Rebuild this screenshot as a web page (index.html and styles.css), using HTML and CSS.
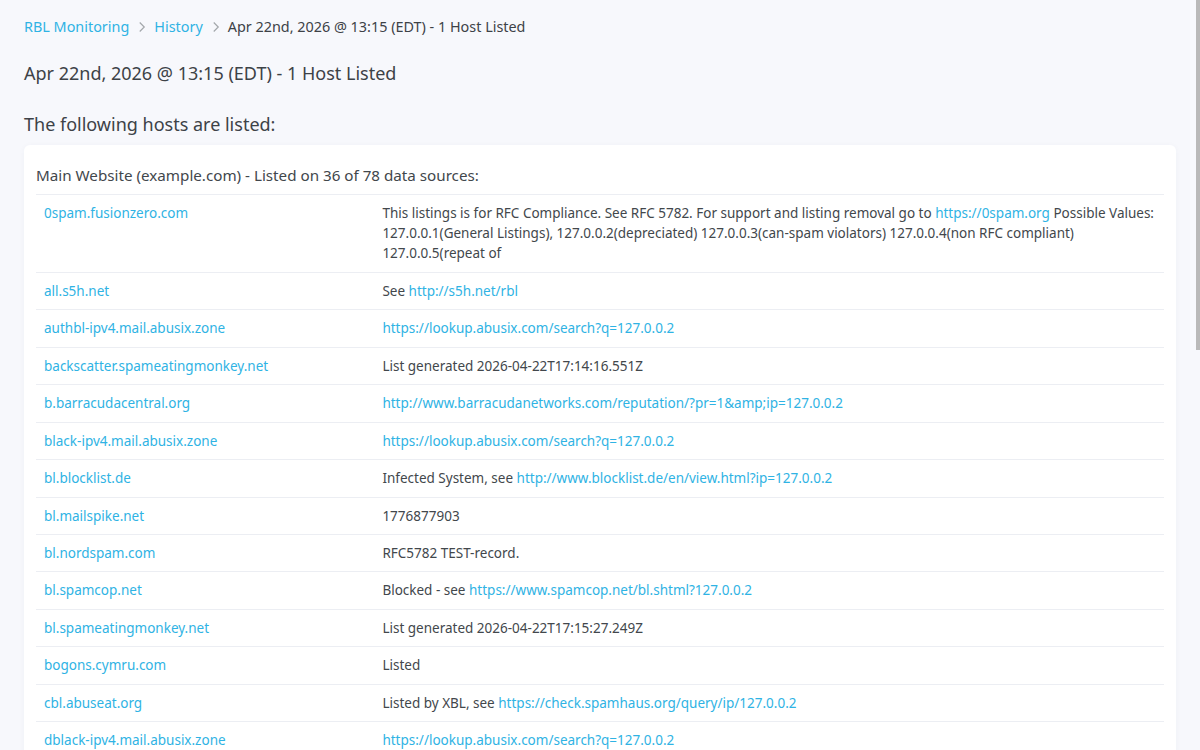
FILE: index.html
```html
<!DOCTYPE html>
<html lang="en">
<head>
    <meta charset="UTF-8">
    <meta name="viewport" content="width=device-width, initial-scale=1.0">
    <title>RBL Monitoring - History</title>
    <link rel="stylesheet" href="styles.css">
</head>
<body>
    <div class="page">
        <nav class="breadcrumb">
            <a href="#">RBL Monitoring</a>
            <svg class="chevron" viewBox="0 0 10 16"><path d="M2 2l6 6-6 6"/></svg>
            <a href="#">History</a>
            <svg class="chevron" viewBox="0 0 10 16"><path d="M2 2l6 6-6 6"/></svg>
            <span class="current">Apr 22nd, 2026 @ 13:15 (EDT) - 1 Host Listed</span>
        </nav>

        <h1 class="page-title">Apr 22nd, 2026 @ 13:15 (EDT) - 1 Host Listed</h1>

        <h2 class="section-title">The following hosts are listed:</h2>

        <div class="card">
            <div class="card-header">Main Website (example.com) - Listed on 36 of 78 data sources:</div>
            <table class="listings">
                <tbody>
                    <tr>
                        <td class="source"><a href="#">0spam.fusionzero.com</a></td>
                        <td>This listings is for RFC Compliance. See RFC 5782. For support and listing removal go to <a href="#">https://0spam.org</a> Possible Values: 127.0.0.1(General Listings), 127.0.0.2(depreciated) 127.0.0.3(can-spam violators) 127.0.0.4(non RFC compliant) 127.0.0.5(repeat of</td>
                    </tr>
                    <tr>
                        <td class="source"><a href="#">all.s5h.net</a></td>
                        <td>See <a href="#">http://s5h.net/rbl</a></td>
                    </tr>
                    <tr>
                        <td class="source"><a href="#">authbl-ipv4.mail.abusix.zone</a></td>
                        <td><a href="#">https://lookup.abusix.com/search?q=127.0.0.2</a></td>
                    </tr>
                    <tr>
                        <td class="source"><a href="#">backscatter.spameatingmonkey.net</a></td>
                        <td>List generated 2026-04-22T17:14:16.551Z</td>
                    </tr>
                    <tr>
                        <td class="source"><a href="#">b.barracudacentral.org</a></td>
                        <td><a href="#">http://www.barracudanetworks.com/reputation/?pr=1&amp;amp;ip=127.0.0.2</a></td>
                    </tr>
                    <tr>
                        <td class="source"><a href="#">black-ipv4.mail.abusix.zone</a></td>
                        <td><a href="#">https://lookup.abusix.com/search?q=127.0.0.2</a></td>
                    </tr>
                    <tr>
                        <td class="source"><a href="#">bl.blocklist.de</a></td>
                        <td>Infected System, see <a href="#">http://www.blocklist.de/en/view.html?ip=127.0.0.2</a></td>
                    </tr>
                    <tr>
                        <td class="source"><a href="#">bl.mailspike.net</a></td>
                        <td>1776877903</td>
                    </tr>
                    <tr>
                        <td class="source"><a href="#">bl.nordspam.com</a></td>
                        <td>RFC5782 TEST-record.</td>
                    </tr>
                    <tr>
                        <td class="source"><a href="#">bl.spamcop.net</a></td>
                        <td>Blocked - see <a href="#">https://www.spamcop.net/bl.shtml?127.0.0.2</a></td>
                    </tr>
                    <tr>
                        <td class="source"><a href="#">bl.spameatingmonkey.net</a></td>
                        <td>List generated 2026-04-22T17:15:27.249Z</td>
                    </tr>
                    <tr>
                        <td class="source"><a href="#">bogons.cymru.com</a></td>
                        <td>Listed</td>
                    </tr>
                    <tr>
                        <td class="source"><a href="#">cbl.abuseat.org</a></td>
                        <td>Listed by XBL, see <a href="#">https://check.spamhaus.org/query/ip/127.0.0.2</a></td>
                    </tr>
                    <tr>
                        <td class="source"><a href="#">dblack-ipv4.mail.abusix.zone</a></td>
                        <td><a href="#">https://lookup.abusix.com/search?q=127.0.0.2</a></td>
                    </tr>
                    <tr>
                        <td class="source"><a href="#">dnsbl.dronebl.org</a></td>
                        <td><a href="#">https://dronebl.org/lookup?ip=127.0.0.2</a></td>
                    </tr>
                    <tr>
                        <td class="source"><a href="#">dnsbl.sorbs.net</a></td>
                        <td>Listed</td>
                    </tr>
                    <tr>
                        <td class="source"><a href="#">dnsbl-1.uceprotect.net</a></td>
                        <td>Net 127.0.0.2 is UCEPROTECT-Level1 listed.</td>
                    </tr>
                    <tr>
                        <td class="source"><a href="#">dnsbl-2.uceprotect.net</a></td>
                        <td>Net 127.0.0.0/24 is UCEPROTECT-Level2 listed.</td>
                    </tr>
                    <tr>
                        <td class="source"><a href="#">dnsbl-3.uceprotect.net</a></td>
                        <td>Net 127.0.0.0/8 is UCEPROTECT-Level3 listed.</td>
                    </tr>
                    <tr>
                        <td class="source"><a href="#">dyna.spamrats.com</a></td>
                        <td>SPAMRATS IP Addresses See: <a href="#">http://www.spamrats.com/bl?127.0.0.2</a></td>
                    </tr>
                    <tr>
                        <td class="source"><a href="#">exitnodes.tor.dnsbl.sectoor.de</a></td>
                        <td>Listed</td>
                    </tr>
                    <tr>
                        <td class="source"><a href="#">ix.dnsbl.manitu.net</a></td>
                        <td>Your e-mail service was detected by mx.selfip.biz as spamming</td>
                    </tr>
                    <tr>
                        <td class="source"><a href="#">noptr.spamrats.com</a></td>
                        <td>SPAMRATS IP Addresses See: <a href="#">http://www.spamrats.com/bl?127.0.0.2</a></td>
                    </tr>
                    <tr>
                        <td class="source"><a href="#">psbl.surriel.com</a></td>
                        <td>Listed in PSBL, see <a href="#">http://psbl.org/listing?ip=127.0.0.2</a></td>
                    </tr>
                    <tr>
                        <td class="source"><a href="#">spam.dnsbl.sorbs.net</a></td>
                        <td>Listed</td>
                    </tr>
                    <tr>
                        <td class="source"><a href="#">spam.spamrats.com</a></td>
                        <td>SPAMRATS IP Addresses See: <a href="#">http://www.spamrats.com/bl?127.0.0.2</a></td>
                    </tr>
                    <tr>
                        <td class="source"><a href="#">truncate.gbudb.net</a></td>
                        <td>Listed</td>
                    </tr>
                    <tr>
                        <td class="source"><a href="#">ubl.unsubscore.com</a></td>
                        <td>Listed</td>
                    </tr>
                    <tr>
                        <td class="source"><a href="#">z.mailspike.net</a></td>
                        <td>1776877903</td>
                    </tr>
                    <tr>
                        <td class="source"><a href="#">zen.spamhaus.org</a></td>
                        <td>Listed by SBL, see <a href="#">https://check.spamhaus.org/query/ip/127.0.0.2</a></td>
                    </tr>
                </tbody>
            </table>
        </div>
    </div>
    <div class="scroll-thumb"></div>
</body>
</html>
```

FILE: styles.css
```css
html {
    background-color: #f7f8fc;
}

body {
    font-family: 'Noto Sans', 'Open Sans', sans-serif;
    font-size: 14px;
    color: #42474c;
    margin: 0;
    padding: 0;
}

a {
    color: #2fb3e4;
    text-decoration: none;
}

.page {
    padding: 16px 24px 40px 24px;
}

.breadcrumb {
    display: flex;
    align-items: center;
    font-size: 14.4px;
    line-height: 21px;
}

.breadcrumb .chevron {
    width: 8px;
    height: 12px;
    margin: 0 8px 0 9px;
    fill: none;
    stroke: #a3a7ab;
    stroke-width: 1.6;
}

.breadcrumb .current {
    color: #3d4247;
}

.page-title {
    font-size: 18px;
    font-weight: 400;
    line-height: 27px;
    margin: 23px 0 0;
    color: #3d4247;
}

.section-title {
    font-size: 18px;
    font-weight: 400;
    line-height: 27px;
    margin: 24px 0 7px;
    color: #3d4247;
}

.card {
    background-color: #fff;
    border-radius: 6px;
    box-shadow: 0 1px 6px rgba(60, 70, 110, 0.04);
    padding: 12px;
}

.card-header {
    font-size: 15.2px;
    line-height: 22.5px;
    padding: 7px 0 7px;
}

.listings {
    width: 100%;
    border-collapse: collapse;
    font-size: 13.5px;
}

.listings td {
    border-top: 1px solid #eceef3;
    padding: 8px;
    line-height: 20.45px;
    vertical-align: top;
}

.listings td.source {
    width: 30%;
}

/* thin overlay scrollbar like the app's */
.scroll-thumb {
    position: fixed;
    top: 0;
    right: 0;
    width: 4px;
    height: 350px;
    background-color: #b9b9b9;
}
```
